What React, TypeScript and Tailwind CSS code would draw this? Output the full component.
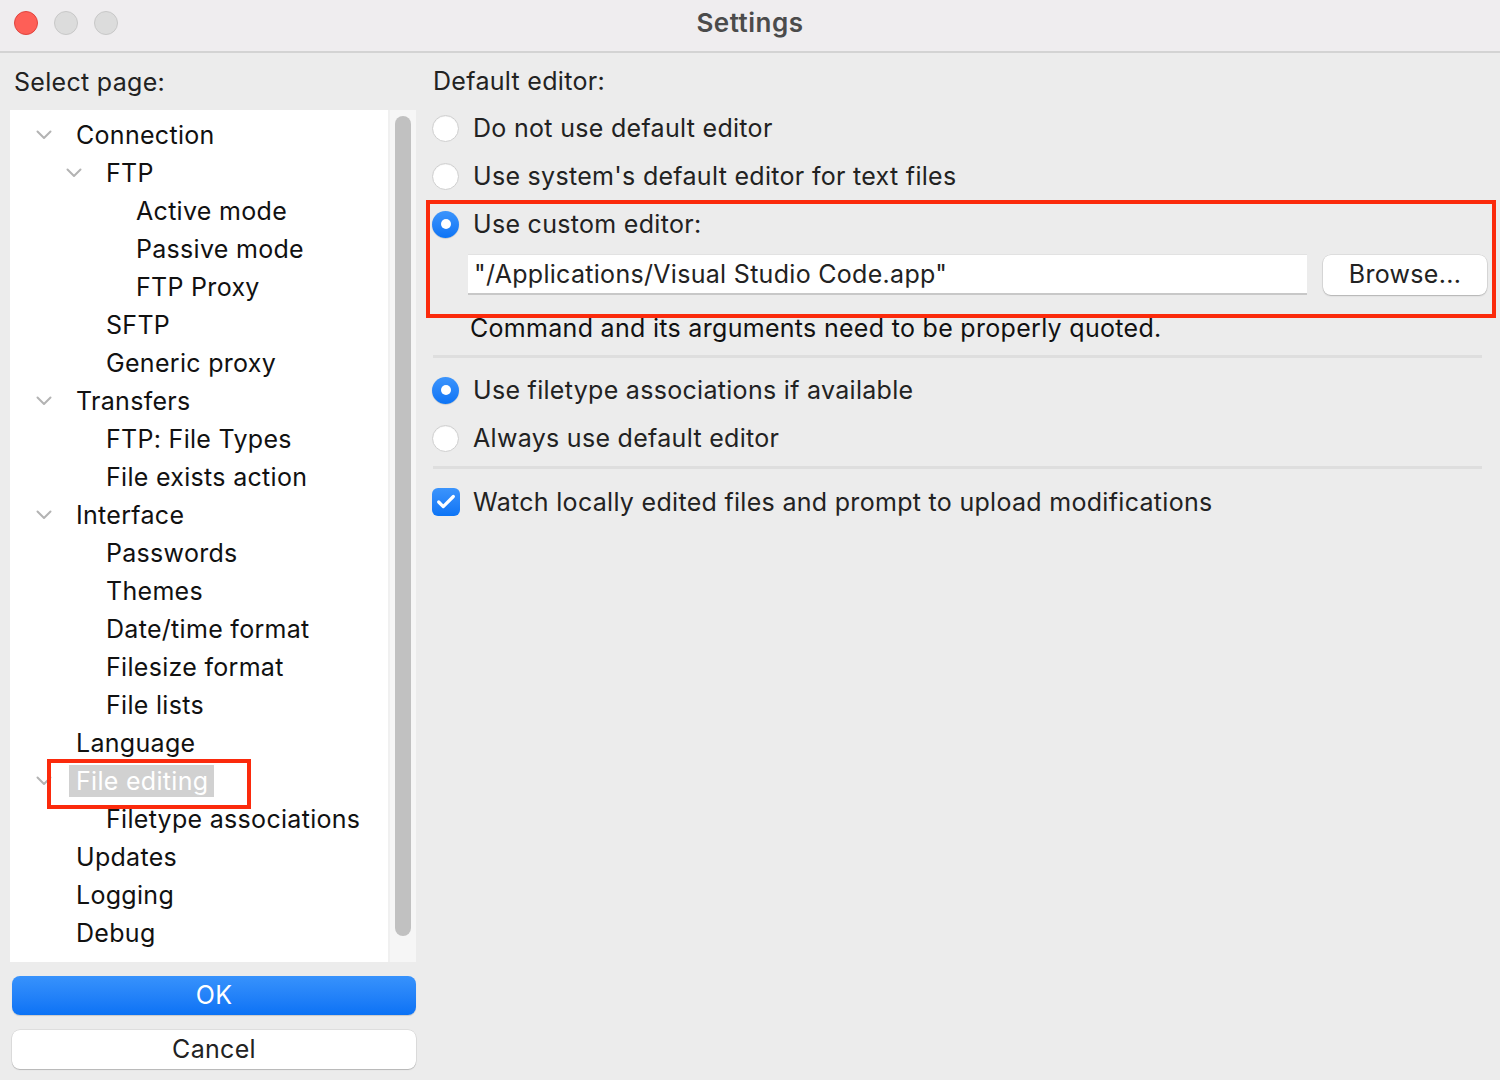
import { Check } from "lucide-react";

const TREE = [
  { label: "Connection", level: 0, open: true },
  { label: "FTP", level: 1, open: true },
  { label: "Active mode", level: 2 },
  { label: "Passive mode", level: 2 },
  { label: "FTP Proxy", level: 2 },
  { label: "SFTP", level: 1 },
  { label: "Generic proxy", level: 1 },
  { label: "Transfers", level: 0, open: true },
  { label: "FTP: File Types", level: 1 },
  { label: "File exists action", level: 1 },
  { label: "Interface", level: 0, open: true },
  { label: "Passwords", level: 1 },
  { label: "Themes", level: 1 },
  { label: "Date/time format", level: 1 },
  { label: "Filesize format", level: 1 },
  { label: "File lists", level: 1 },
  { label: "Language", level: 0 },
  { label: "File editing", level: 0, open: true, selected: true },
  { label: "Filetype associations", level: 1 },
  { label: "Updates", level: 0 },
  { label: "Logging", level: 0 },
  { label: "Debug", level: 0 },
];

const PAD = ["pl-[66px]", "pl-[96px]", "pl-[126px]"];
const CHEV = ["left-[26px]", "left-[56px]", "left-[86px]"];

function Chevron({ level }: { level: number }) {
  return (
    <svg
      width="16"
      height="10"
      viewBox="0 0 16 10"
      fill="none"
      className={`absolute top-[14px] ${CHEV[level]}`}
    >
      <path d="M1.5 1.5l6.5 6.5 6.5-6.5" stroke="#b3b3b3" strokeWidth="2" strokeLinecap="round" strokeLinejoin="round" />
    </svg>
  );
}

function Radio({ checked }: { checked?: boolean }) {
  if (checked) {
    return (
      <span className="w-[27px] h-[27px] shrink-0 rounded-full bg-gradient-to-b from-[#3b94fc] to-[#0b74f5] flex items-center justify-center shadow-[0_0.5px_1px_rgba(0,0,0,0.25)]">
        <span className="w-[10px] h-[10px] rounded-full bg-white" />
      </span>
    );
  }
  return (
    <span className="w-[27px] h-[27px] shrink-0 rounded-full bg-white border border-[#cfcfcf] shadow-[inset_0_0.5px_1px_rgba(0,0,0,0.08)]" />
  );
}

function Option({ label, checked }: { label: string; checked?: boolean }) {
  return (
    <div className="h-[48px] flex items-center gap-[14px] -ml-[1px]">
      <Radio checked={checked} />
      <span>{label}</span>
    </div>
  );
}

export default function App() {
  return (
    <div
      className="relative w-[1500px] h-[1080px] bg-[#ececec] text-[#222] flex flex-col overflow-hidden text-[25px] leading-none tracking-[0.3px]"
      style={{ fontFamily: "Inter, 'Liberation Sans', sans-serif" }}
    >
      {/* title bar */}
      <div className="relative h-[53px] shrink-0 bg-[#efedef] border-b-2 border-[#d3d3d3] flex items-center justify-center">
        <div className="absolute left-[14px] top-[11px] flex gap-[16px]">
          <span className="w-[24px] h-[24px] rounded-full bg-[#fe5f57] border border-[#e0443e]" />
          <span className="w-[24px] h-[24px] rounded-full bg-[#dcdcdc] border border-[#c8c8c8]" />
          <span className="w-[24px] h-[24px] rounded-full bg-[#dcdcdc] border border-[#c8c8c8]" />
        </div>
        <span className="text-[26px] font-semibold text-[#4b4b4b] -mt-[5px] tracking-[0.5px]">Settings</span>
      </div>

      <div className="flex flex-1 pl-[10px]">
        {/* left column */}
        <div className="w-[406px] flex flex-col">
          <div className="h-[57px] flex items-center pl-[4px] pt-[1px]">Select page:</div>
          <div className="flex h-[852px]">
            <div className="w-[378px] bg-white pt-[6px] flex flex-col">
              {TREE.map((t) => (
                <div key={t.label} className={`relative h-[38px] flex items-center ${PAD[t.level]}`}>
                  {t.open && <Chevron level={t.level} />}
                  {t.selected ? (
                    <span className="relative bg-[#d1d1d1] text-white px-[7px] h-[32px] flex items-center -ml-[7px] pr-[6px]">
                      {t.label}
                    </span>
                  ) : (
                    <span className="text-[#111]">{t.label}</span>
                  )}
                </div>
              ))}
            </div>
            <div className="w-[28px] bg-[#f6f6f6] border-l-2 border-[#f0f0f0] pt-[6px] pb-[26px] flex justify-center">
              <div className="w-[16px] h-full rounded-full bg-[#c1c1c1]" />
            </div>
          </div>
          <button className="mt-[14px] ml-[2px] h-[39px] rounded-[8px] bg-gradient-to-b from-[#3792fc] to-[#0a72f5] text-white text-[25px] shadow-[0_1px_1px_rgba(0,0,0,0.15)]">
            OK
          </button>
          <button className="mt-[15px] ml-[2px] h-[39px] rounded-[8px] bg-white text-[#222] text-[25px] shadow-[0_0_0_0.5px_rgba(0,0,0,0.12),0_1px_1px_rgba(0,0,0,0.18)]">
            Cancel
          </button>
        </div>

        {/* right column */}
        <div className="ml-[17px] w-[1060px] flex flex-col">
          <div className="h-[51px] flex items-center pt-[6px]">Default editor:</div>
          <Option label="Do not use default editor" />
          <Option label="Use system's default editor for text files" />
          <Option label="Use custom editor:" checked />
          <div className="mt-[6px] pl-[35px] flex items-center">
            <div className="w-[839px] shrink-0 h-[41px] bg-white border-t border-[#e2e2e2] border-b-2 border-b-[#c8c8c8] flex items-center pl-[6px]">
              "/Applications/Visual Studio Code.app"
            </div>
            <button className="ml-[16px] w-[164px] shrink-0 h-[40px] rounded-[8px] bg-white text-[#222] text-[25px] shadow-[0_0_0_0.5px_rgba(0,0,0,0.12),0_1px_1.5px_rgba(0,0,0,0.2)]">
              Browse...
            </button>
          </div>
          <div className="mt-[14px] h-[38px] flex items-center pl-[37px] text-[#111]">
            Command and its arguments need to be properly quoted.
          </div>
          <div className="mt-[8px] h-[3px] w-[1049px] bg-[#dedede]" />
          <div className="mt-[8px]">
            <Option label="Use filetype associations if available" checked />
            <Option label="Always use default editor" />
          </div>
          <div className="mt-[4px] h-[3px] w-[1049px] bg-[#dedede]" />
          <div className="mt-[9px] h-[48px] flex items-center gap-[13px] -ml-[1px]">
            <span className="w-[28px] h-[28px] rounded-[6px] bg-gradient-to-b from-[#3b94fc] to-[#0b74f5] flex items-center justify-center">
              <Check size={22} strokeWidth={3.5} color="white" />
            </span>
            <span>Watch locally edited files and prompt to upload modifications</span>
          </div>
        </div>
      </div>

      {/* red annotation boxes */}
      <div className="absolute left-[426px] top-[200px] w-[1070px] h-[118px] border-[4px] border-[#fb2a0c] pointer-events-none" />
      <div className="absolute left-[47px] top-[759px] w-[204px] h-[50px] border-[4px] border-[#fb2a0c] pointer-events-none" />
    </div>
  );
}
